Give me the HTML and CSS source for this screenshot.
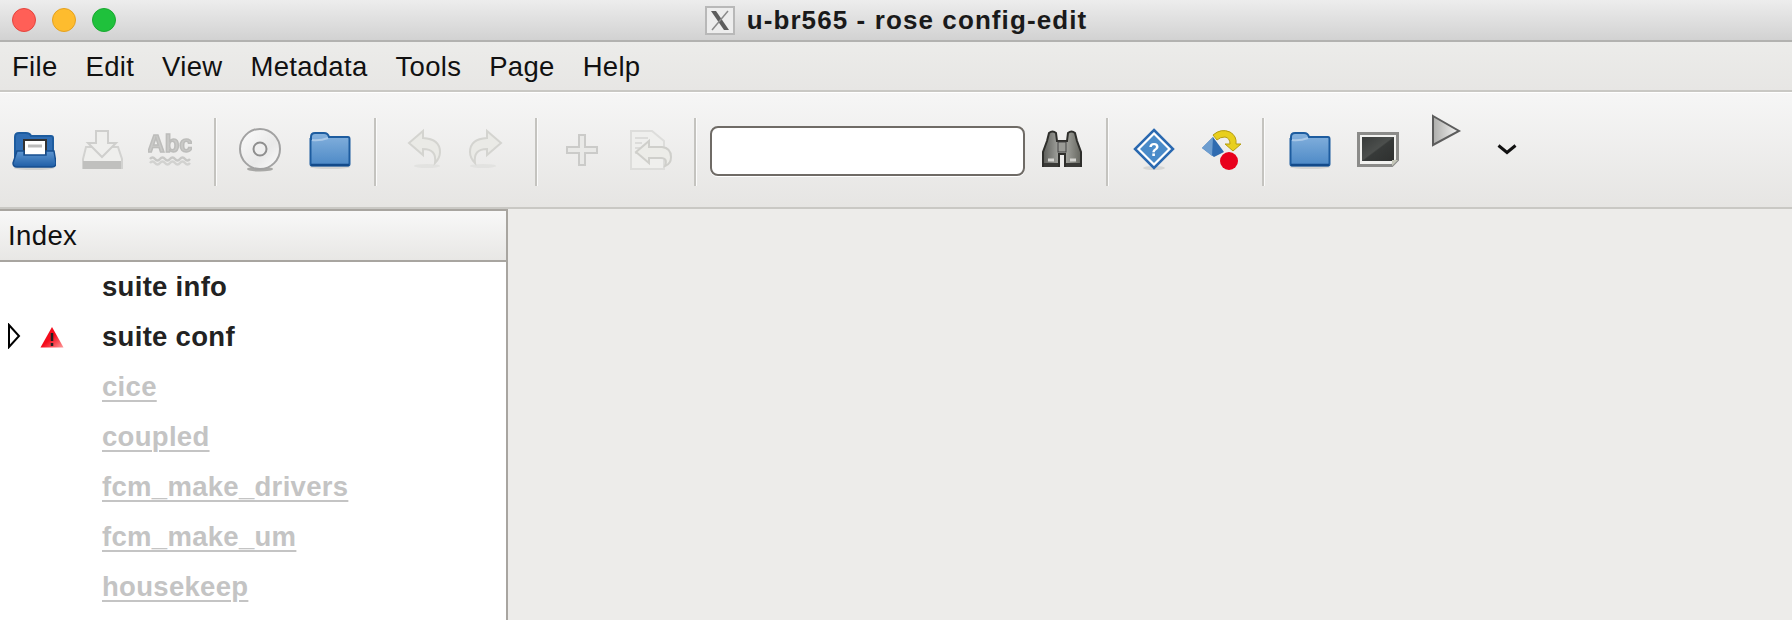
FILE: index.html
```html
<!DOCTYPE html>
<html lang="en">
<head>
    <meta charset="UTF-8">
    <meta name="viewport" content="width=device-width, initial-scale=1.0">
    <title>u-br565 - rose config-edit</title>
    <link rel="stylesheet" href="styles.css">
</head>
<body>
    <svg class="defs" aria-hidden="true">
        <defs>
            <linearGradient id="blueFill" x1="0" y1="0" x2="0" y2="1">
                <stop offset="0" stop-color="#86b2de"/>
                <stop offset="1" stop-color="#4c89c6"/>
            </linearGradient>
            <linearGradient id="openFill" x1="0" y1="0" x2="0" y2="1">
                <stop offset="0" stop-color="#5f97d2"/>
                <stop offset="1" stop-color="#1f5ea6"/>
            </linearGradient>
            <linearGradient id="discFill" x1="0" y1="0" x2="1" y2="1">
                <stop offset="0" stop-color="#fcfcfc"/>
                <stop offset="0.6" stop-color="#e9e9e9"/>
                <stop offset="1" stop-color="#fcfcfc"/>
            </linearGradient>
            <linearGradient id="screenFill" x1="0" y1="0" x2="1" y2="1">
                <stop offset="0" stop-color="#383b3a"/>
                <stop offset="0.48" stop-color="#4c4f4d"/>
                <stop offset="0.52" stop-color="#373a39"/>
                <stop offset="1" stop-color="#2e302f"/>
            </linearGradient>
            <linearGradient id="playFill" x1="0" y1="0" x2="1" y2="0">
                <stop offset="0" stop-color="#adadab"/>
                <stop offset="1" stop-color="#f4f4f3"/>
            </linearGradient>
            <linearGradient id="warnFill" x1="0" y1="0" x2="1" y2="1">
                <stop offset="0.5" stop-color="#f40c1c"/>
                <stop offset="1" stop-color="#ff9a9a"/>
            </linearGradient>
            <linearGradient id="glassFill" x1="0" y1="0" x2="1" y2="0">
                <stop offset="0" stop-color="#5c5d59"/>
                <stop offset="0.5" stop-color="#b0b1ac"/>
                <stop offset="1" stop-color="#65665f"/>
            </linearGradient>
            <symbol id="folder" viewBox="0 0 44 44">
                <ellipse cx="22" cy="39" rx="20" ry="2" fill="#d4d4d2"/>
                <path d="M3 11 V9 Q3 5 7 5 H16 Q20 5 21 9 H40 Q41.500 9 41.500 11 V36 Q41.500 37.500 40 37.500 H4 Q2.500 37.500 2.500 36 V11 Z" fill="url(#blueFill)" stroke="#1d5c9f" stroke-width="2"/>
                <path d="M4 12 Q12 13 20 10" fill="none" stroke="#a9c8e8" stroke-width="2"/>
                <path d="M3 37 H41" stroke="#124a8a" stroke-width="2.500"/>
            </symbol>
        </defs>
    </svg>

    <header class="titlebar">
        <div class="traffic">
            <span class="light red"></span>
            <span class="light amber"></span>
            <span class="light green"></span>
        </div>
        <div class="title">
            <svg class="xlogo" width="30" height="29" viewBox="0 0 30 29">
                <rect x="1" y="1" width="28" height="27" fill="#ededed" stroke="#b8b8b8" stroke-width="2"/>
                <path d="M6 5 H11 L24 24 H19 Z" fill="#5c5c5c"/>
                <path d="M23 5 L7 24" stroke="#8a8a8a" stroke-width="1.500"/>
            </svg>
            <span class="title-text">u-br565 - rose config-edit</span>
        </div>
    </header>

    <nav class="menubar">
        <span class="menu-item">File</span>
        <span class="menu-item">Edit</span>
        <span class="menu-item">View</span>
        <span class="menu-item">Metadata</span>
        <span class="menu-item">Tools</span>
        <span class="menu-item">Page</span>
        <span class="menu-item">Help</span>
    </nav>

    <div class="toolbar">
        <!-- open -->
        <svg class="icon" viewBox="0 0 44 44">
            <ellipse cx="22" cy="40" rx="20" ry="2" fill="#d0d0ce"/>
            <path d="M3 30 V9 Q3 5 7 5 H14 Q18 5 19 8 H39 Q41 8 41 10 V30 Z" fill="#2f6db3" stroke="#1d5c9f" stroke-width="2"/>
            <rect x="12" y="12" width="22" height="17" fill="#fff" stroke="#333" stroke-width="2"/>
            <path d="M16 18 H30" stroke="#bbb" stroke-width="3"/>
            <path d="M5 23 H12 V27 H34 V23 H42 L44 35 Q44 39 40 39 H5 Q1 39 1 35 Z" fill="url(#openFill)" stroke="#174f90" stroke-width="1.500"/>
        </svg>
        <!-- save, disabled -->
        <svg class="icon" viewBox="0 0 44 44">
            <path d="M5 19 H37 L41 31 V40 H2 V31 Z" fill="#efefed" stroke="#d2d2d0" stroke-width="2"/>
            <rect x="2" y="33" width="38" height="8" fill="#c0c0be"/>
            <path d="M15 3 H27 V15 H35 L21 29 L7 15 H15 Z" fill="#efefed" stroke="#cfcfcd" stroke-width="2"/>
        </svg>
        <!-- check spelling, disabled -->
        <svg class="icon" viewBox="0 0 44 44">
            <text x="22" y="24" class="abc">Abc</text>
            <path d="M2 31 q2.500 -3 5 0 t5 0 t5 0 t5 0 t5 0 t5 0 t5 0 t5 0" fill="none" stroke="#c8c8c6" stroke-width="2.500"/>
            <path d="M2 35 q2.500 -3 5 0 t5 0 t5 0 t5 0 t5 0 t5 0 t5 0 t5 0" fill="none" stroke="#d2d2d0" stroke-width="2.500"/>
        </svg>
        <span class="sep"></span>
        <!-- disc -->
        <svg class="icon" viewBox="0 0 44 44">
            <ellipse cx="22" cy="41" rx="13" ry="2.500" fill="#a8a8a6"/>
            <circle cx="22" cy="21" r="20" fill="url(#discFill)" stroke="#a2a2a2" stroke-width="2"/>
            <circle cx="22" cy="21" r="6.500" fill="#efefef" stroke="#8e8e8e" stroke-width="2"/>
        </svg>
        <svg class="icon"><use href="#folder"/></svg>
        <span class="sep"></span>
        <!-- undo -->
        <svg class="icon" viewBox="0 0 44 44">
            <ellipse cx="25" cy="38" rx="13" ry="2" fill="#e2e2e0"/>
            <path d="M7 15 L21 3 V10 Q38 11 38 24 Q38 30 33 35 Q35 21 21 21 V27 Z" fill="#eaeae6" stroke="#d4d4d0" stroke-width="2"/>
        </svg>
        <!-- redo -->
        <svg class="icon" viewBox="0 0 44 44">
            <ellipse cx="19" cy="38" rx="13" ry="2" fill="#e2e2e0"/>
            <path d="M37 15 L23 3 V10 Q6 11 6 24 Q6 30 11 35 Q9 21 23 21 V27 Z" fill="#eaeae6" stroke="#d4d4d0" stroke-width="2"/>
        </svg>
        <span class="sep"></span>
        <!-- add -->
        <svg class="icon" viewBox="0 0 44 44">
            <path d="M19 7 H25 V19 H37 V25 H25 V37 H19 V25 H7 V19 H19 Z" fill="#e9e9e7" stroke="#cbcbc9" stroke-width="2"/>
        </svg>
        <!-- revert -->
        <svg class="icon" viewBox="0 0 44 44">
            <path d="M3 3 H24 L36 13 V41 H3 Z" fill="#efefed" stroke="#dddddb" stroke-width="2"/>
            <path d="M7 10 H20 M7 15 H14 M7 20 H12 M7 25 H12" stroke="#dcdcda" stroke-width="2"/>
            <path d="M8 24 L21 13 V19 H34 Q43 20 43 29 Q43 36 37 38 Q40 30 33 30 H21 V35 Z" fill="#ecece8" stroke="#cfcfcb" stroke-width="2"/>
        </svg>
        <span class="sep"></span>
        <input class="search" type="text" aria-label="Search">
        <!-- find -->
        <svg class="icon" viewBox="0 0 44 44">
            <path d="M9 5 Q12.500 2 16 5 L17 13 H27 L28 5 Q31.500 2 35 5 L37 13 L41 24 V38 H25 V26 H19 V38 H3 V24 L7 13 Z" fill="url(#glassFill)" stroke="#2e2e2b" stroke-width="2"/>
            <rect x="18" y="14" width="8" height="10" fill="#9a9b96" stroke="#444" stroke-width="1"/>
            <path d="M4 37 H18 M26 37 H40" stroke="#3a3a37" stroke-width="4"/>
            <path d="M8 32 H14 M30 32 H36" stroke="#d4d4d0" stroke-width="3"/>
        </svg>
        <span class="sep"></span>
        <!-- help -->
        <svg class="icon" viewBox="0 0 44 44">
            <ellipse cx="22" cy="40" rx="11" ry="2" fill="#d6d6d4"/>
            <path d="M22 2 L41 21 L22 40 L3 21 Z" fill="#fff" stroke="#2a69b0" stroke-width="2.500"/>
            <path d="M22 7 L36 21 L22 35 L8 21 Z" fill="#4a8bc9"/>
            <text x="22" y="27.500" class="qmark">?</text>
        </svg>
        <!-- switch -->
        <svg class="icon" viewBox="0 0 44 44">
            <path d="M15 9 L4 20 L16 29 L26 24 Z" fill="#2f6bb0"/>
            <path d="M15 9 L4 20 L14 28 Z" fill="#6d9dcf"/>
            <path d="M15 7 Q23 0 32 4 Q39 8 38 16 H43 L35 23 L27 16 H32 Q32 10 27 9 Q22 9 19 12 Z" fill="#e8cf1e" stroke="#b49c10" stroke-width="1"/>
            <circle cx="31" cy="33" r="9" fill="#e8001c"/>
        </svg>
        <span class="sep"></span>
        <svg class="icon"><use href="#folder"/></svg>
        <!-- terminal -->
        <svg class="icon" viewBox="0 0 44 44">
            <path d="M2.500 5.500 H41.500 V32 L36 37.500 H2.500 Z" fill="#f2f2f0" stroke="#8b8b89" stroke-width="3"/>
            <rect x="6" y="9" width="32" height="24" fill="url(#screenFill)"/>
            <path d="M36 38 L42 32 H36 Z" fill="#c4c6b8"/>
        </svg>
        <!-- run -->
        <svg class="icon run" viewBox="0 0 44 44">
            <path d="M10 7 L36 22 L10 36 Z" fill="url(#playFill)" stroke="#5c5c5c" stroke-width="2"/>
        </svg>
        <!-- overflow -->
        <svg class="icon" viewBox="0 0 44 44">
            <path d="M14.500 17.500 L23 24.500 L31.500 17.500" fill="none" stroke="#111" stroke-width="3"/>
        </svg>
    </div>

    <main class="workspace">
        <section class="index-panel">
            <div class="panel-head">Index</div>
            <ul class="tree">
                <li class="row">suite info</li>
                <li class="row">
                    <svg class="expander" width="14" height="26" viewBox="0 0 14 26">
                        <path d="M2 2 L12 13 L2 24 Z" fill="#fff" stroke="#000" stroke-width="2"/>
                    </svg>
                    <svg class="warning" width="24" height="22" viewBox="0 0 24 22">
                        <path d="M12 1 L23.500 21.500 H0.500 Z" fill="url(#warnFill)"/>
                        <path d="M12 7 V15 M12 17 V20" stroke="#222" stroke-width="2.500"/>
                    </svg>
                    suite conf
                </li>
                <li class="row off">cice</li>
                <li class="row off">coupled</li>
                <li class="row off">fcm_make_drivers</li>
                <li class="row off">fcm_make_um</li>
                <li class="row off">housekeep</li>
            </ul>
        </section>
        <section class="pane"></section>
    </main>
</body>
</html>
```

FILE: styles.css
```css
html, body {
    height: 100%;
}
body {
    margin: 0;
    font-family: "Liberation Sans", Arial, sans-serif;
    background-color: #edecea;
    color: #111;
    overflow: hidden;
    display: flex;
    flex-direction: column;
}
.defs {
    position: absolute;
    width: 0;
    height: 0;
}

/* window title */
.titlebar {
    height: 40px;
    flex: none;
    display: flex;
    align-items: center;
    justify-content: center;
    position: relative;
    background: linear-gradient(#ededed, #d2d2d2);
    border-bottom: 2px solid #b2b2b0;
}
.traffic {
    position: absolute;
    left: 12px;
    top: 8px;
    display: flex;
    gap: 16px;
}
.light {
    width: 24px;
    height: 24px;
    border-radius: 50%;
    box-sizing: border-box;
}
.red {
    background-color: #ff5f57;
    border: 1px solid #e5443d;
}
.amber {
    background-color: #febc2e;
    border: 1px solid #e5a11f;
}
.green {
    background-color: #1fc13c;
    border: 1px solid #19a930;
}
.title {
    display: flex;
    align-items: center;
    gap: 12px;
}
.title-text {
    font-size: 26px;
    font-weight: bold;
    letter-spacing: 1.100px;
    color: #1a1a1a;
}

/* menu */
.menubar {
    height: 50px;
    flex: none;
    box-sizing: border-box;
    padding: 2px 0 0 12px;
    display: flex;
    align-items: center;
    gap: 28px;
    background: linear-gradient(#ececea, #e7e6e4);
    border-bottom: 2px solid #c9c8c4;
    font-size: 27.500px;
    letter-spacing: 0.300px;
}

/* toolbar */
.toolbar {
    height: 117px;
    flex: none;
    box-sizing: border-box;
    padding-left: 12px;
    display: grid;
    grid-template-columns: 69px 67px 66px 24px 70px 66px 28px 62px 71px 25px 68px 66px 16px 330px 66px 26px 66px 64px 26px 68px 67px 61px 44px;
    align-items: center;
    justify-items: start;
    background: linear-gradient(#f6f6f6, #e6e5e3);
    border-top: 1px solid #fff;
    border-bottom: 2px solid #c9c8c4;
}
.icon {
    display: block;
    width: 44px;
    height: 44px;
    filter: blur(0.5px);
}
.run {
    margin-bottom: 38px;
}
.sep {
    width: 2px;
    height: 68px;
    margin-top: 4px;
    background-color: #c4c3bf;
    border-right: 1px solid #fbfbfb;
}
.search {
    width: 315px;
    height: 50px;
    margin-top: 2px;
    box-sizing: border-box;
    border: 2px solid #6f6b66;
    border-radius: 8px;
    background-color: #fff;
    box-shadow: 0 1px 0 #fff;
    padding: 0 8px;
}
.abc {
    font-size: 24px;
    font-weight: bold;
    text-anchor: middle;
    fill: #c9c9c7;
    stroke: #bdbdbb;
    stroke-width: 1.500px;
}
.qmark {
    font-size: 18px;
    font-weight: bold;
    text-anchor: middle;
    fill: #fff;
}

/* index tree */
.workspace {
    flex: 1;
    display: flex;
    min-height: 0;
}
.index-panel {
    width: 506px;
    flex: none;
    background-color: #fff;
    border-top: 2px solid #a8a5a0;
    border-right: 2px solid #a8a5a0;
}
.panel-head {
    height: 49px;
    line-height: 49px;
    padding-left: 8px;
    font-size: 27.500px;
    letter-spacing: 0.400px;
    background: linear-gradient(#f8f8f8, #e8e7e5);
    border-bottom: 2px solid #a8a5a0;
}
.tree {
    list-style: none;
    margin: 0;
    padding: 0;
}
.row {
    height: 50px;
    line-height: 50px;
    padding-left: 102px;
    position: relative;
    font-size: 27.500px;
    font-weight: bold;
    letter-spacing: 0.300px;
    color: #222;
}
.off {
    color: #c4c4c4;
    text-decoration: underline;
    text-decoration-thickness: 2px;
    text-underline-offset: 4px;
}
.expander {
    position: absolute;
    left: 7px;
    top: 11px;
}
.warning {
    position: absolute;
    left: 40px;
    top: 14px;
}
.pane {
    flex: 1;
    background-color: #edecea;
}
```
